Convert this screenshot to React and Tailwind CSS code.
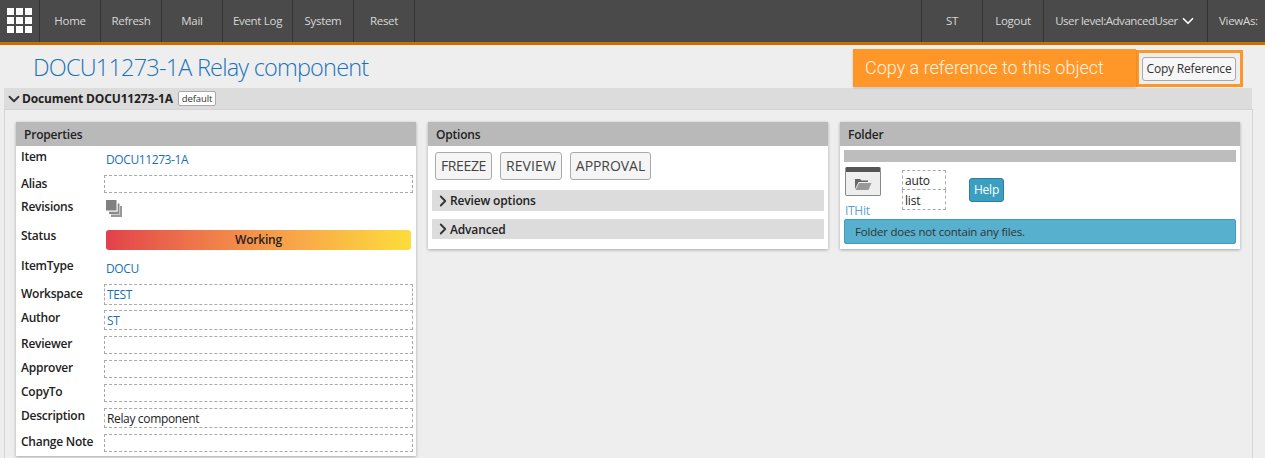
import React from "react";
import { ChevronDown, ChevronRight } from "lucide-react";

const font = { fontFamily: '"Open Sans", "Noto Sans", sans-serif' };

function NavItem({ w, children }) {
  return (
    <div className={`${w} h-[42px] flex items-center justify-center border-r border-[#333] text-[11.5px] tracking-[-0.3px] text-[#d8d8d8] whitespace-nowrap shrink-0`}>
      {children}
    </div>
  );
}

function Row({ h, label, top, children }) {
  return (
    <div className={`${h} flex`}>
      <div className={`w-[88px] pl-[5px] shrink-0 text-[12px] tracking-[-0.25px] font-semibold text-[#222] leading-[16px] ${top}`}>{label}</div>
      <div className="flex-1 min-w-0">{children}</div>
    </div>
  );
}

function Box({ h, mt, blue, children }) {
  return (
    <div className={`${h} ${mt} border border-dashed border-[#aaa] px-[2px] text-[12px] tracking-[-0.35px] leading-[19px] ${blue ? "text-[#1a6fb5]" : "text-[#222]"}`}>
      {children}
    </div>
  );
}

function Panel({ title, w, h, children }) {
  return (
    <div className={`${w} ${h} bg-white shadow-[0_1px_3px_rgba(0,0,0,0.3)] shrink-0`}>
      <div className="h-[24px] bg-[#b9b9b9] px-[8px] text-[12px] tracking-[-0.2px] font-semibold text-[#222] leading-[25px]">{title}</div>
      {children}
    </div>
  );
}

function Accordion({ h, mt, children }) {
  return (
    <div className={`${h} ${mt} bg-[#dcdcdc] flex items-center pl-[2px] text-[12px] tracking-[-0.15px] font-semibold text-[#222]`}>
      <ChevronRight size={18} strokeWidth={2.4} className="text-[#333] -mr-[2px] shrink-0" />
      {children}
    </div>
  );
}

function ActionButton({ w, track, children }) {
  return (
    <button className={`${w} ${track} h-[28px] rounded-[3px] border border-[#aaa] bg-[#f5f5f5] text-[14px] text-[#444] leading-none`}>
      {children}
    </button>
  );
}

export default function App() {
  return (
    <div className="relative w-[1265px] h-[458px] overflow-hidden bg-[#eeeeee]" style={font}>
      <header className="h-[45px] bg-[#4a4a4a] border-b-[3px] border-[#cc6d00] flex">
        <div className="w-[40px] h-[42px] border-r border-[#333] shrink-0 pl-[7px] pt-[8px]">
          <div className="grid grid-cols-3 gap-[2px] w-[25px]">
            {Array.from({ length: 9 }).map((_, i) => (
              <div key={i} className="w-[7px] h-[7px] bg-white" />
            ))}
          </div>
        </div>
        <NavItem w="w-[61px]">Home</NavItem>
        <NavItem w="w-[61px]">Refresh</NavItem>
        <NavItem w="w-[61px]">Mail</NavItem>
        <NavItem w="w-[70px]">Event Log</NavItem>
        <NavItem w="w-[61px]">System</NavItem>
        <NavItem w="w-[61px]">Reset</NavItem>
        <div className="flex-1 border-r border-[#333]" />
        <NavItem w="w-[61px]">ST</NavItem>
        <NavItem w="w-[61px]">Logout</NavItem>
        <NavItem w="w-[164px]">
          <span className="tracking-[-0.45px]">User level:AdvancedUser</span>
          <ChevronDown size={18} strokeWidth={2.2} className="ml-[1px] -mr-[1px] text-white shrink-0" />
        </NavItem>
        <div className="w-[57px] h-[42px] flex items-center pl-[11px] text-[11.5px] tracking-[-0.3px] text-[#d8d8d8] whitespace-nowrap">ViewAs:</div>
      </header>

      <div className="h-[43px] pl-[33px] pt-[2px] flex items-center text-[23.5px] tracking-[-0.8px] font-light text-[#1a73ba] leading-none whitespace-nowrap">
        DOCU11273-1A Relay component
      </div>

      <div className="mx-[4px] w-[1248px] h-[21px] bg-[#dcdcdc] flex items-center pl-[1px] text-[12px] tracking-[-0.15px] font-bold text-[#222]">
        <ChevronDown size={18} strokeWidth={2.4} className="text-[#333] -mr-[1px] shrink-0" />
        <span>Document DOCU11273-1A</span>
        <span className="ml-[5px] h-[15px] px-[3px] bg-white border border-[#aaa] rounded-[2px] text-[9.5px] tracking-[-0.1px] font-normal leading-[13px] text-[#333]">default</span>
      </div>

      <main className="mx-[4px] w-[1249px] h-[349px] border-l border-r border-t border-[#d4d4d4] pl-[11px] pt-[12px] flex items-start gap-[12px]">
        <Panel title="Properties" w="w-[400px]" h="h-[334px]">
          <div className="pr-[3px]">
            <Row h="h-[26px]" label="Item" top="pt-[3px]">
              <div className="pt-[6px] pl-[2px] text-[12px] tracking-[-0.4px] leading-[16px] text-[#1a6fb5]">DOCU11273-1A</div>
            </Row>
            <Row h="h-[24px]" label="Alias" top="pt-[4px]"><Box h="h-[18px]" mt="mt-[3px]" /></Row>
            <Row h="h-[29px]" label="Revisions" top="pt-[3px]">
              <svg width="16" height="17" viewBox="0 0 16 17" className="ml-[2px] mt-[4px]">
                <rect x="5" y="6" width="11" height="11" fill="#999" />
                <rect x="3" y="3.5" width="11" height="11" fill="#fff" />
                <rect x="3" y="3.5" width="10.5" height="10.5" fill="#8a8a8a" />
                <rect x="1.2" y="1.2" width="10.5" height="10.5" fill="#fff" />
                <rect x="0" y="0" width="10.5" height="10.5" fill="#808080" />
              </svg>
            </Row>
            <Row h="h-[29px]" label="Status" top="pt-[3px]">
              <div className="mt-[5px] ml-[2px] mr-[2px] h-[20px] rounded-[3px] bg-gradient-to-r from-[#e2404a] to-[#fddd3c] flex items-center justify-center text-[12px] tracking-[-0.2px] font-semibold text-[#222]">Working</div>
            </Row>
            <Row h="h-[28px]" label="ItemType" top="pt-[4px]">
              <div className="pt-[7px] pl-[2px] text-[12px] tracking-[-0.4px] leading-[16px] text-[#1a6fb5]">DOCU</div>
            </Row>
            <Row h="h-[25px]" label="Workspace" top="pt-[4px]"><Box h="h-[21px]" mt="mt-[2px]" blue>TEST</Box></Row>
            <Row h="h-[26px]" label="Author" top="pt-[3px]"><Box h="h-[20px]" mt="mt-[3px]" blue>ST</Box></Row>
            <Row h="h-[24px]" label="Reviewer" top="pt-[3px]"><Box h="h-[18px]" mt="mt-[3px]" /></Row>
            <Row h="h-[24px]" label="Approver" top="pt-[3px]"><Box h="h-[18px]" mt="mt-[3px]" /></Row>
            <Row h="h-[24px]" label="CopyTo" top="pt-[3px]"><Box h="h-[18px]" mt="mt-[3px]" /></Row>
            <Row h="h-[26px]" label="Description" top="pt-[3px]"><Box h="h-[20px]" mt="mt-[3px]">Relay component</Box></Row>
            <Row h="h-[24px]" label="Change Note" top="pt-[3px]"><Box h="h-[18px]" mt="mt-[3px]" /></Row>
          </div>
        </Panel>

        <Panel title="Options" w="w-[400px]" h="h-[127px]">
          <div className="px-[4px] pt-[6px]">
            <div className="flex gap-[8px] pl-[3px]">
              <ActionButton w="w-[57px]" track="tracking-[-0.35px]">FREEZE</ActionButton>
              <ActionButton w="w-[62px]" track="tracking-[0.1px]">REVIEW</ActionButton>
              <ActionButton w="w-[81px]" track="tracking-[-0.05px]">APPROVAL</ActionButton>
            </div>
            <Accordion h="h-[21px]" mt="mt-[10px]">Review options</Accordion>
            <Accordion h="h-[20px]" mt="mt-[8px]">
              <span className="relative top-[1px]">Advanced</span>
            </Accordion>
          </div>
        </Panel>

        <Panel title="Folder" w="w-[400px]" h="h-[127px]">
          <div className="px-[4px] pt-[4px]">
            <div className="h-[12px] bg-[#bdbdbd]" />
            <div className="h-[57px] flex relative">
              <div className="w-[37px] ml-[1px] mt-[5px] shrink-0">
                <div className="w-[36px] h-[29px] rounded-[2px] border border-[#888] border-t-[5px] border-t-[#555] bg-[#eeeeee] flex items-center justify-center">
                  <svg width="18" height="14" viewBox="0 0 18 14">
                    <path d="M1 2h5l1.5 1.5H14V5H4.5L1 12z" fill="#666" />
                    <path d="M5 6h12.5L14.5 13H1.5z" fill="#999" />
                  </svg>
                </div>
                <div className="text-[12px] tracking-[-0.3px] leading-[14px] mt-[8px] text-[#5a9fd4] font-normal">ITHit</div>
              </div>
              <div className="w-[44px] ml-[20px] mt-[8px] shrink-0 text-[12px] tracking-[-0.2px] text-[#222] leading-[20px]">
                <div className="h-[20px] border border-dashed border-[#aaa] pl-[2px]">auto</div>
                <div className="h-[20px] border border-dashed border-[#aaa] border-t-0 pl-[2px] pt-[1px]">list</div>
              </div>
              <div className="ml-[23px] mt-[16px] w-[35px] h-[24px] rounded-[3px] bg-[#3b9fc1] border border-[#2b7f9c] text-white text-[12px] tracking-[-0.2px] flex items-center justify-center">Help</div>
            </div>
            <div className="h-[25px] rounded-[2px] bg-[#57b0cd] border border-[#3f9dbb] pl-[10px] text-[11.5px] tracking-[-0.2px] leading-[23px] text-[#333]">Folder does not contain any files.</div>
          </div>
        </Panel>
      </main>

      <div className="absolute left-[1136px] top-[50px] w-[107px] h-[37px] border-[3px] border-[#ff9728] flex items-center justify-center pr-[1px]">
        <button className="w-[94px] h-[24px] rounded-[3px] border border-[#aaa] bg-[#f6f6f6] text-[12px] tracking-[-0.2px] text-[#333] leading-none whitespace-nowrap">Copy Reference</button>
      </div>
      <div className="absolute left-[853px] top-[49px] w-[283px] h-[38px] bg-[#ff9728] shadow-[0_1px_2px_rgba(0,0,0,0.2)] pl-[12px] text-[18px] leading-[38px] text-[#fff3e3] font-light whitespace-nowrap" style={{ fontFamily: 'Roboto, sans-serif' }}>
        Copy a reference to this object
      </div>
    </div>
  );
}
